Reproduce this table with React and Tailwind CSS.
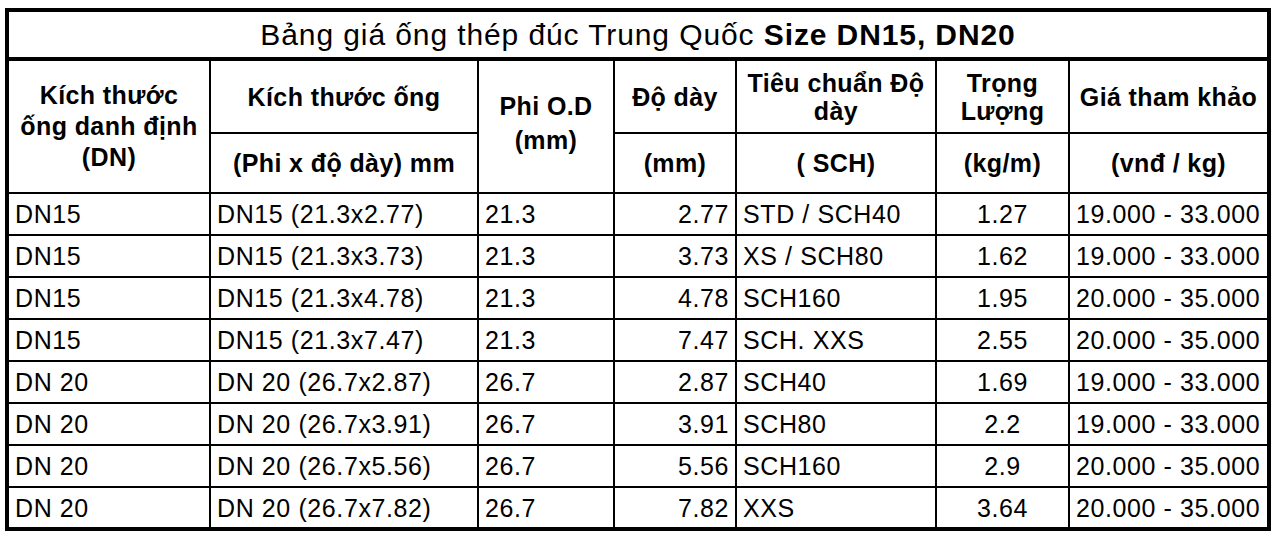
import React from 'react';

const rows = [
  ['DN15', 'DN15 (21.3x2.77)', '21.3', '2.77', 'STD / SCH40', '1.27', '19.000 - 33.000'],
  ['DN15', 'DN15 (21.3x3.73)', '21.3', '3.73', 'XS / SCH80', '1.62', '19.000 - 33.000'],
  ['DN15', 'DN15 (21.3x4.78)', '21.3', '4.78', 'SCH160', '1.95', '20.000 - 35.000'],
  ['DN15', 'DN15 (21.3x7.47)', '21.3', '7.47', 'SCH. XXS', '2.55', '20.000 - 35.000'],
  ['DN 20', 'DN 20 (26.7x2.87)', '26.7', '2.87', 'SCH40', '1.69', '19.000 - 33.000'],
  ['DN 20', 'DN 20 (26.7x3.91)', '26.7', '3.91', 'SCH80', '2.2', '19.000 - 33.000'],
  ['DN 20', 'DN 20 (26.7x5.56)', '26.7', '5.56', 'SCH160', '2.9', '20.000 - 35.000'],
  ['DN 20', 'DN 20 (26.7x7.82)', '26.7', '7.82', 'XXS', '3.64', '20.000 - 35.000'],
];

// per-column alignment of the body cells
const cellAlign = [
  'text-left pl-[6px]',
  'text-left pl-[6px]',
  'text-left pl-[6px]',
  'text-right pr-[6px]',
  'text-left pl-[6px]',
  'text-center',
  'text-left pl-[6px]',
];

export default function App() {
  const th = 'border-2 border-black font-bold text-center align-middle text-[25px] tracking-[0.4px] leading-[28px] px-1';

  return (
    <div
      className="bg-white w-[1280px] h-[539px] pt-[8px] pl-[5px] text-black"
      style={{ fontFamily: '"Liberation Sans", Arial, sans-serif' }}
    >
      <table className="border-collapse table-fixed border-4 border-black w-[1262px]">
        <colgroup>
          <col className="w-[203px]" />
          <col className="w-[268px]" />
          <col className="w-[136px]" />
          <col className="w-[122px]" />
          <col className="w-[200px]" />
          <col className="w-[133px]" />
          <col className="w-[200px]" />
        </colgroup>
        <thead>
          <tr className="h-[49px]">
            <th colSpan={7} className="border-4 border-black text-center font-normal text-[30px] tracking-[0.9px] leading-[34px]">
              Bảng giá ống thép đúc Trung Quốc <span className="font-bold">Size DN15, DN20</span>
            </th>
          </tr>
          <tr className="h-[74px]">
            <th rowSpan={2} className={`${th} leading-[31px]`}>
              Kích thước<br />ống danh định<br />(DN)
            </th>
            <th className={th}>Kích thước ống</th>
            <th rowSpan={2} className={`${th} leading-[34px] pb-[8px]`}>
              Phi O.D<br />(mm)
            </th>
            <th className={th}>Độ dày</th>
            <th className={th}>Tiêu chuẩn Độ<br />dày</th>
            <th className={th}>Trọng<br />Lượng</th>
            <th className={th}>Giá tham khảo</th>
          </tr>
          <tr className="h-[60px]">
            <th className={th}>(Phi x độ dày) mm</th>
            <th className={th}>(mm)</th>
            <th className={th}>( SCH)</th>
            <th className={th}>(kg/m)</th>
            <th className={th}>(vnđ / kg)</th>
          </tr>
        </thead>
        <tbody>
          {rows.map((row, i) => (
            <tr key={i} className="h-[42px]">
              {row.map((cell, j) => (
                <td
                  key={j}
                  className={`border-2 border-black align-middle text-[25px] tracking-[0.6px] leading-[30px] whitespace-nowrap ${cellAlign[j]}`}
                >
                  {cell}
                </td>
              ))}
            </tr>
          ))}
        </tbody>
      </table>
    </div>
  );
}
